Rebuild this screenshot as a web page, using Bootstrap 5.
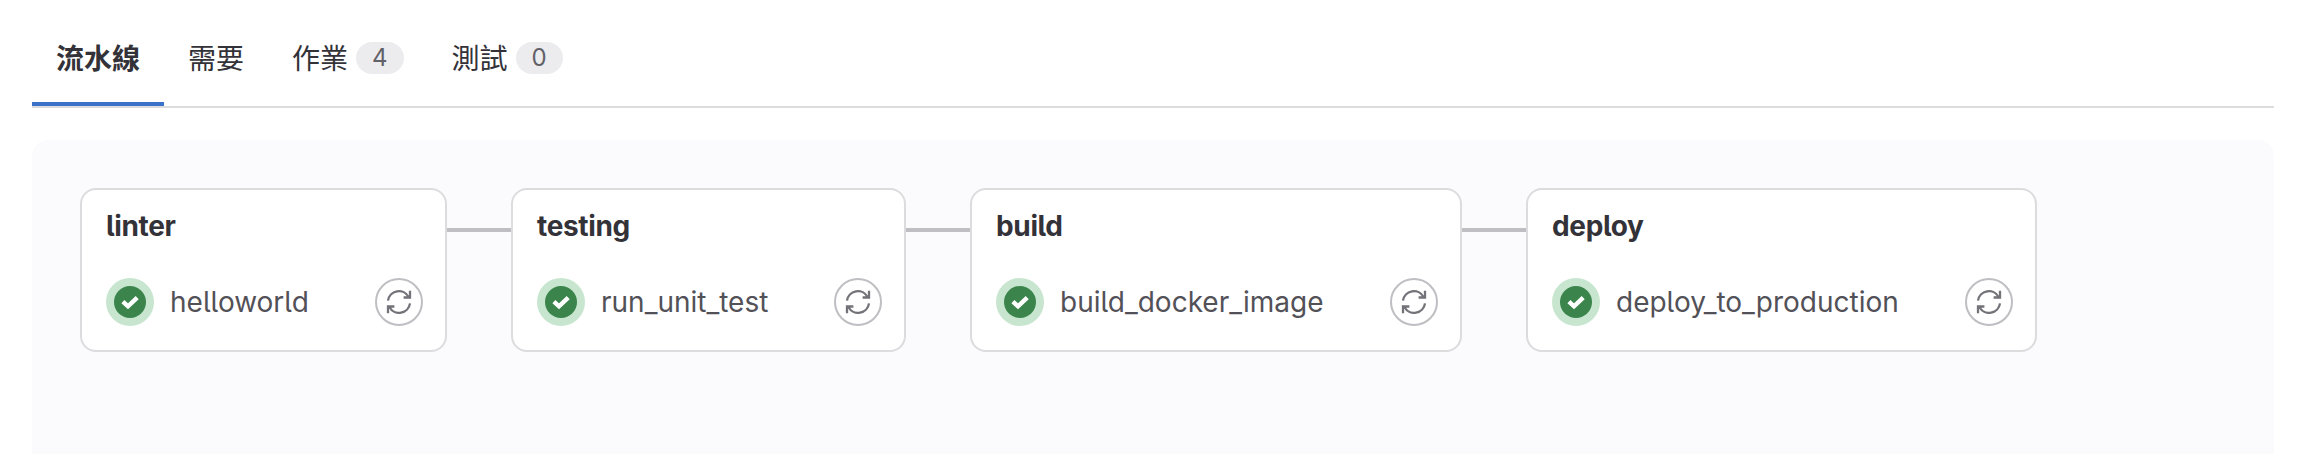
<!DOCTYPE html>
<html lang="zh-Hant">
<head>
<meta charset="utf-8">
<title>流水線</title>
<link rel="stylesheet" href="https://cdn.jsdelivr.net/npm/bootstrap@5.3.0/dist/css/bootstrap.min.css">
<style>
  body { font-family: Inter, "Noto Sans CJK TC", sans-serif; font-size: 28px; line-height: 40px; color: #333238; background: #fff; height: 454px; overflow: hidden; padding: 12px 26px 0 32px; }
  .pipe-tabs { --bs-nav-tabs-border-width: 0; height: 96px; border-bottom: 2px solid #dcdcde; }
  .pipe-tabs .nav-link { --bs-nav-link-color: #333238; --bs-nav-link-hover-color: #333238; height: 94px; padding: 0 24px; border: 0; border-radius: 0; margin: 0; gap: 8px; }
  .pipe-tabs .nav-link.active { color: #333238; box-shadow: inset 0 -4px #3972c8; background: none; }
  .count { height: 32px; line-height: 32px; margin-bottom: 2px; padding: 0 16px; font-size: 24px; font-weight: 400; color: #626168; background: #ececef; }
  .graph { margin-top: 32px; height: 314px; padding: 48px; background: #fbfafd; border-radius: 16px 16px 0 0; }
  .stage { height: 164px; border: 2px solid #dcdcde; border-radius: 16px; padding: 16px 22px 24px 24px; font-feature-settings: "cv05"; }
  .stage h2 { font-size: 28px; line-height: 40px; font-weight: 700; letter-spacing: -.35px; color: #333238; }
  .w-linter { width: 367px; } .w-testing { width: 395px; } .w-build { width: 492px; } .w-deploy { width: 511px; }
  .job-name { color: #535158; }
  .connector { width: 64px; height: 4px; margin-top: 40px; background: #bfbfc3; }
  .retry { --bs-btn-border-color: #bfbfc3; --bs-btn-border-width: 2px; width: 48px; height: 48px; background: #fff; }
  svg { display: block; flex: none; }
</style>
</head>
<body>
<svg width="0" height="0" class="position-absolute">
  <symbol id="ok" viewBox="0 0 48 48"><circle cx="24" cy="24" r="24" fill="#c8e6cf"/><circle cx="24" cy="24" r="16" fill="#3b854c"/><path d="M16.9 23.6 22 28.3 31.2 19.6" fill="none" stroke="#fff" stroke-width="4.4"/></symbol>
  <symbol id="again" viewBox="0 0 48 48"><path d="M13 22.7A11 11 0 0 1 33.6 19M35 12.8V19.5H28.6M35 25.3A11 11 0 0 1 14.4 29M13 35.2V28.5H19.4" fill="none" stroke="#737278" stroke-width="2.3"/></symbol>
</svg>
<ul class="nav nav-tabs pipe-tabs">
  <li class="nav-item"><a class="nav-link active d-flex align-items-center fw-bold" href="#">流水線</a></li>
  <li class="nav-item"><a class="nav-link d-flex align-items-center" href="#">需要</a></li>
  <li class="nav-item"><a class="nav-link d-flex align-items-center" href="#">作業 <span class="count rounded-pill">4</span></a></li>
  <li class="nav-item"><a class="nav-link d-flex align-items-center" href="#">測試 <span class="count rounded-pill">0</span></a></li>
</ul>
<main class="graph d-flex align-items-start">
  <section class="stage w-linter bg-white d-flex flex-column justify-content-between flex-shrink-0">
    <h2 class="mb-0">linter</h2>
    <div class="d-flex align-items-center gap-3"><svg width="48" height="48"><use href="#ok"/></svg><span class="job-name">helloworld</span><button class="btn retry rounded-circle p-0 ms-auto d-flex align-items-center justify-content-center" aria-label="重試"><svg width="48" height="48"><use href="#again"/></svg></button></div>
  </section>
  <div class="connector"></div>
  <section class="stage w-testing bg-white d-flex flex-column justify-content-between flex-shrink-0">
    <h2 class="mb-0">testing</h2>
    <div class="d-flex align-items-center gap-3"><svg width="48" height="48"><use href="#ok"/></svg><span class="job-name">run_unit_test</span><button class="btn retry rounded-circle p-0 ms-auto d-flex align-items-center justify-content-center" aria-label="重試"><svg width="48" height="48"><use href="#again"/></svg></button></div>
  </section>
  <div class="connector"></div>
  <section class="stage w-build bg-white d-flex flex-column justify-content-between flex-shrink-0">
    <h2 class="mb-0">build</h2>
    <div class="d-flex align-items-center gap-3"><svg width="48" height="48"><use href="#ok"/></svg><span class="job-name">build_docker_image</span><button class="btn retry rounded-circle p-0 ms-auto d-flex align-items-center justify-content-center" aria-label="重試"><svg width="48" height="48"><use href="#again"/></svg></button></div>
  </section>
  <div class="connector"></div>
  <section class="stage w-deploy bg-white d-flex flex-column justify-content-between flex-shrink-0">
    <h2 class="mb-0">deploy</h2>
    <div class="d-flex align-items-center gap-3"><svg width="48" height="48"><use href="#ok"/></svg><span class="job-name">deploy_to_production</span><button class="btn retry rounded-circle p-0 ms-auto d-flex align-items-center justify-content-center" aria-label="重試"><svg width="48" height="48"><use href="#again"/></svg></button></div>
  </section>
</main>
<script src="https://cdn.jsdelivr.net/npm/bootstrap@5.3.0/dist/js/bootstrap.bundle.min.js"></script>
</body>
</html>
